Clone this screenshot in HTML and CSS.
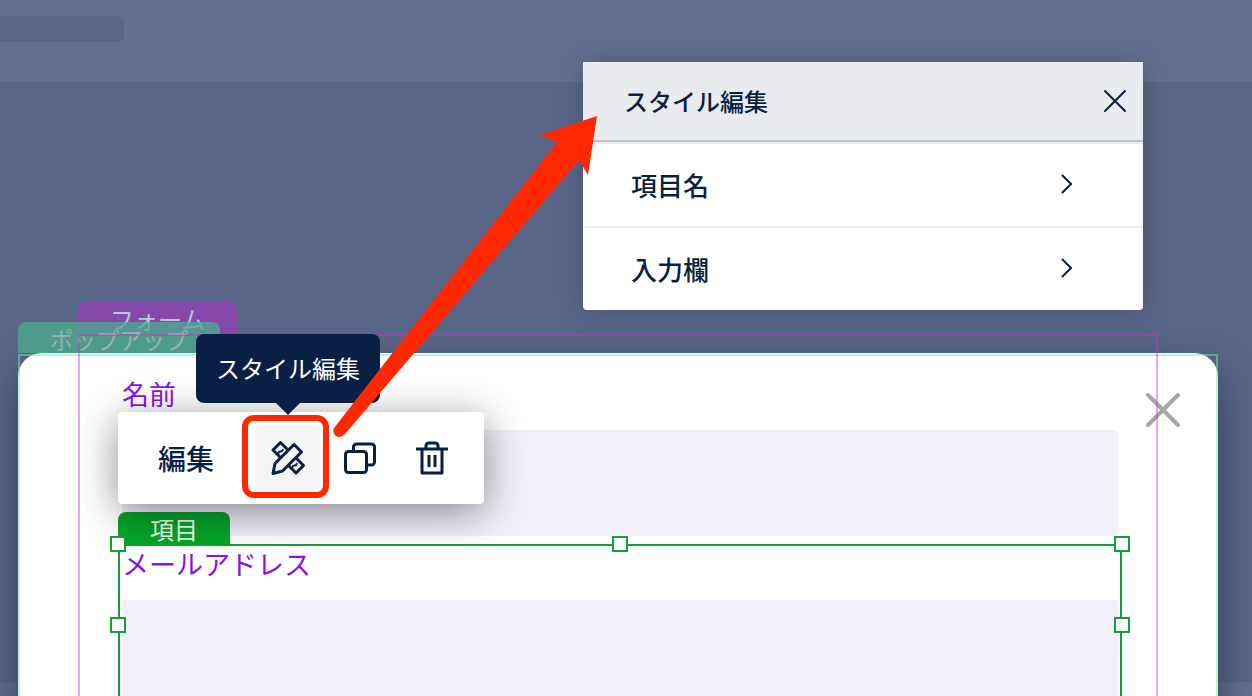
FILE: index.html
```
<!DOCTYPE html>
<html lang="ja">
<head>
<meta charset="utf-8">
<title>スタイル編集</title>
<link rel="stylesheet" href="styles.css">
</head>
<body>
<div class="page">
  <header class="site-bar"><div class="site-logo"></div></header>
  <div class="site-strip"></div>

  <main class="popup">
    <span class="tag tag-form">フォーム</span>
    <span class="tag tag-popup">ポップアップ</span>
    <div class="frame frame-popup"></div>
    <button class="popup-close" aria-label="閉じる">
      <svg width="36" height="36" viewBox="0 0 36 36"><path d="M3 3 33 33M33 3 3 33"/></svg>
    </button>
    <form class="form">
      <div class="field">
        <label for="name">名前</label>
        <input id="name" type="text">
      </div>
      <div class="field">
        <label for="mail">メールアドレス</label>
        <input id="mail" type="email">
        <div class="selection">
          <span class="tag tag-item">項目</span>
          <i class="handle left top"></i><i class="handle center top"></i><i class="handle right top"></i>
          <i class="handle left middle"></i><i class="handle right middle"></i>
        </div>
      </div>
    </form>
    <div class="frame frame-form"></div>

    <div class="toolbar" role="toolbar">
      <button class="tool tool-text">編集</button>
      <button class="tool active" aria-label="スタイル編集">
        <svg width="36" height="36" viewBox="0 0 36 36">
          <path d="M10.500 2.500 3 10l23 23 7.500-7.500z"/>
          <path class="tick" d="M8 14q1-3 2.500-2.500t2.500-2.500M22 28q1-3 2.500-2.500t2.500-2.500"/>
          <path class="cover" d="M24 4.500 31.500 12 12.500 31 3 33.500 5 23.500z"/>
        </svg>
      </button>
      <button class="tool" aria-label="複製">
        <svg width="36" height="36" viewBox="0 0 36 36">
          <rect x="11.500" y="4" width="21" height="21" rx="3"/>
          <rect class="cover white" x="3.500" y="11.500" width="21" height="21" rx="3"/>
        </svg>
      </button>
      <button class="tool" aria-label="削除">
        <svg width="36" height="36" viewBox="0 0 36 36">
          <path d="M2 9h32M8 9v24h20V9M12 9V6q0-3 3-3h6q3 0 3 3v3M15 15v12M21 15v12"/>
        </svg>
      </button>
      <div class="tooltip" role="tooltip">スタイル編集</div>
      <div class="highlight"></div>
    </div>
  </main>

  <section class="panel">
    <header class="panel-head">
      <h1>スタイル編集</h1>
      <button aria-label="閉じる"><svg width="24" height="24" viewBox="0 0 24 24"><path d="M2 2 22 22M22 2 2 22"/></svg></button>
    </header>
    <button class="panel-row">項目名<svg width="12" height="20" viewBox="0 0 12 20"><path d="M2 1 11 10 2 19"/></svg></button>
    <button class="panel-row">入力欄<svg width="12" height="20" viewBox="0 0 12 20"><path d="M2 1 11 10 2 19"/></svg></button>
  </section>

  <svg class="pointer" width="268" height="324" viewBox="0 0 268 324"><path d="M265 1 208 20 225 27 2 313Q0 318 4 321 8 324 13 319L247 45 256 60Z"/></svg>
</div>
</body>
</html>
```
FILE: styles.css
```
* { box-sizing: border-box; }
body {
  margin: 0;
  font-family: "Noto Sans CJK JP", sans-serif;
  color: #0a1f44;
}
button {
  border: 0;
  padding: 0;
  background: none;
  font: inherit;
  color: inherit;
}
svg { display: block; fill: none; stroke: #0a1f44; }

.page {
  position: relative;
  height: 100vh;
  overflow: hidden;
  background: #5a6687;
}
.site-bar {
  height: 82px;
  padding-top: 16px;
  background: #636f8f;
}
.site-logo {
  width: 124px;
  height: 26px;
  border-radius: 0 6px 6px 0;
  background: #5a6687;
}
.site-strip {
  position: absolute;
  inset: auto 0 0;
  height: 14px;
  background: #636f8f;
}

.popup {
  position: relative;
  margin: 271px 34px 0 18px;
  padding: 21px 100px 80px 104px;
  border-radius: 24px;
  background: #fff;
  box-shadow: 0 20px 40px rgba(10, 20, 40, 0.5);
}
.form { position: relative; }
.field {
  position: relative;
  padding-bottom: 8px;
}
.field label {
  display: block;
  padding-bottom: 16px;
  font-size: 27px;
  line-height: 40px;
  color: #8a14e6;
}
.field input {
  display: block;
  width: 100%;
  height: 106px;
  border: 0;
  border-radius: 3px;
  background: #f4f0fa;
}

.frame {
  position: absolute;
  border: 2px solid;
  pointer-events: none;
}
.frame-popup {
  inset: 1px 0 0;
  border-color: rgba(110, 240, 175, 0.5);
}
.frame-form {
  inset: -19px 60px 0;
  border-color: rgba(185, 55, 205, 0.42);
}

.tag {
  position: absolute;
  border-radius: 8px 8px 0 0;
  font-size: 24px;
  line-height: 34px;
  padding: 0 32px;
  white-space: nowrap;
}
.tag-form {
  left: 60px;
  top: -51px;
  height: 32px;
  background: #8549ab;
  color: #b4c9d9;
}
.tag-popup {
  left: 0;
  top: -31px;
  height: 31px;
  font-size: 23px;
  background: rgba(76, 175, 140, 0.75);
  color: #96b2ae;
}
.tag-item {
  left: -2px;
  top: -34px;
  background: #05a52a;
  color: #e9ffe9;
}

.selection {
  position: absolute;
  inset: 0 -4px 8px;
  border: 2px solid #14a03c;
  pointer-events: none;
}
.handle {
  position: absolute;
  width: 16px;
  height: 16px;
  border: 2px solid #14a03c;
  background: #fff;
}
.left { left: -10px; }
.center { left: calc(50% - 8px); }
.right { right: -10px; }
.top { top: -10px; }
.middle { top: calc(50% - 8px); }

.popup-close {
  position: absolute;
  top: 39px;
  right: 37px;
}
.popup-close svg {
  stroke: #a6a6a6;
  stroke-width: 4;
  stroke-linecap: round;
}

.toolbar {
  position: absolute;
  left: 100px;
  top: 59px;
  display: flex;
  gap: 8px;
  padding: 14px 20px;
  border-radius: 4px;
  background: #fff;
  box-shadow: 0 8px 40px rgba(0, 0, 0, 0.45);
}
.tool {
  display: flex;
  align-items: center;
  justify-content: center;
  width: 64px;
  height: 64px;
  border-radius: 4px;
}
.tool-text {
  width: auto;
  padding: 0 34px 0 20px;
  font-size: 28px;
  font-weight: 500;
}
.tool svg {
  stroke-width: 3;
  stroke-linejoin: round;
}
.tool .tick { stroke-width: 2; }
.tool.active { background: #f4f4f4; }
.cover { fill: #f4f4f4; }
.cover.white { fill: #fff; }
.tooltip {
  position: absolute;
  left: 78px;
  bottom: 101px;
  padding: 16px 20px 17px;
  border-radius: 8px;
  background: #0a1f44;
  color: #fff;
  font-size: 24px;
  line-height: 36px;
  white-space: nowrap;
}
.tooltip::after {
  content: "";
  position: absolute;
  left: calc(50% - 12px);
  top: 100%;
  border: 12px solid transparent;
  border-top-color: #0a1f44;
  border-bottom: 0;
}
.highlight {
  position: absolute;
  left: 124px;
  top: 3px;
  width: 87px;
  height: 83px;
  border: 6px solid #ff2800;
  border-radius: 12px;
  pointer-events: none;
}

.panel {
  position: absolute;
  top: 62px;
  right: 109px;
  width: 560px;
  border-radius: 0 0 4px 4px;
  background: #fff;
  box-shadow: 0 0 28px rgba(10, 20, 40, 0.22);
}
.panel-head {
  display: flex;
  align-items: center;
  justify-content: space-between;
  height: 80px;
  padding: 0 16px 0 41px;
  border-bottom: 2px solid #bfc2c9;
  background: #e9ebef;
}
.panel-head h1 {
  margin: 0;
  padding-bottom: 2px;
  font-size: 24px;
  font-weight: 500;
}
.panel-head svg { stroke-width: 2; stroke-linecap: round; }
.panel-row {
  display: flex;
  align-items: center;
  justify-content: space-between;
  width: 100%;
  height: 84px;
  padding: 0 71px 2px 48px;
  border-top: 2px solid #ecedf0;
  font-size: 26px;
  font-weight: 500;
}
.panel-row svg { stroke-width: 2; }

.pointer {
  position: absolute;
  left: 332px;
  top: 115px;
  fill: #ff2800;
  stroke: none;
  pointer-events: none;
}
```
